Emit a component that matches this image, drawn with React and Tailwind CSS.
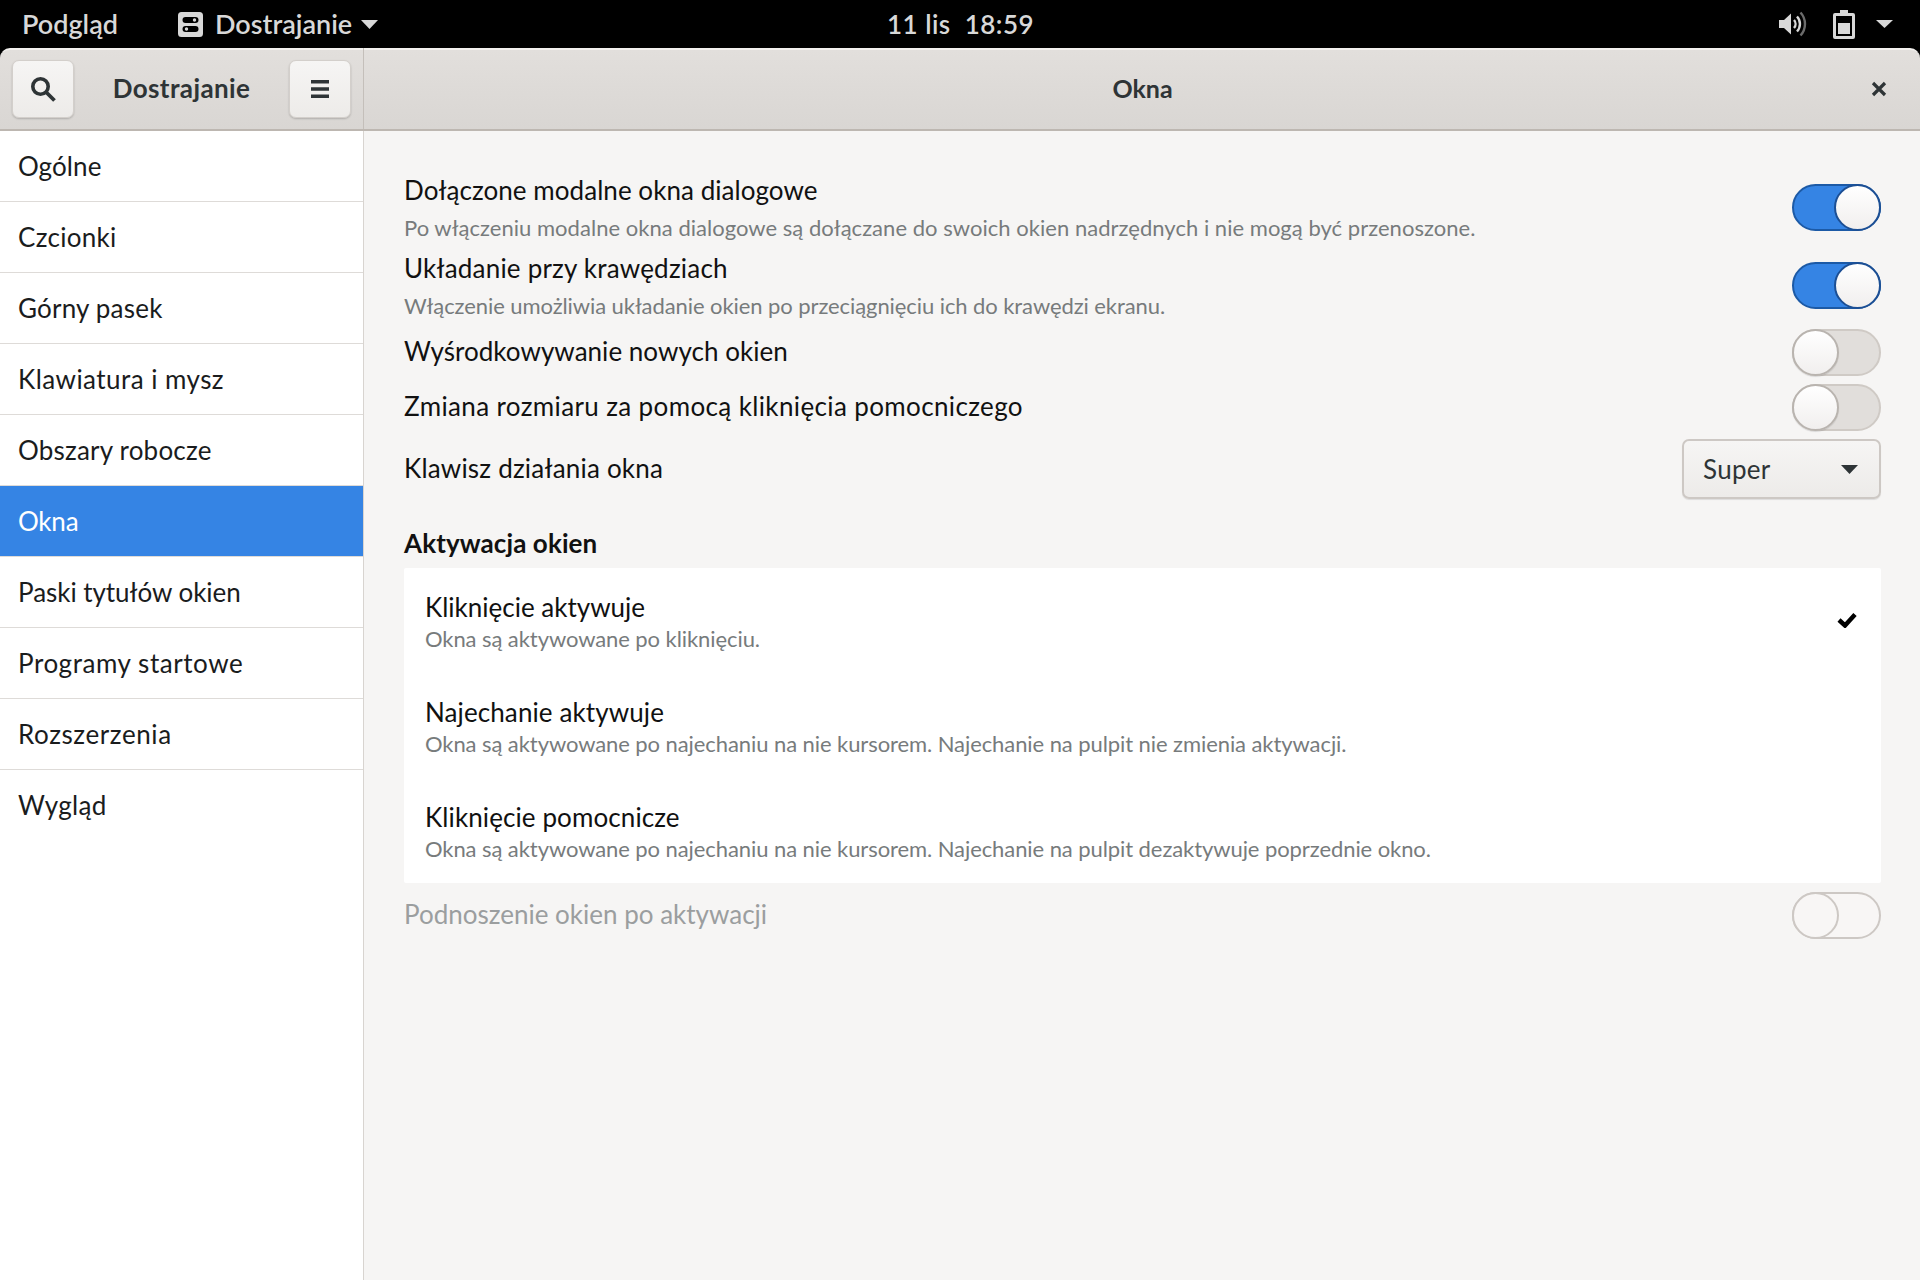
import React from "react";

const FONT = "font-['Lato','Noto_Sans',sans-serif]";

function Switch({ state }) {
  if (state === "on")
    return (
      <div className="flex h-[47px] w-[89px] shrink-0 justify-end rounded-full border-2 border-[#1c5aa6] bg-[#3584e4]">
        <div className="-m-[2px] h-[47px] w-[47px] rounded-full border-2 border-[#1c4f94] bg-gradient-to-b from-white to-[#f1efee]" />
      </div>
    );
  if (state === "disabled")
    return (
      <div className="flex h-[47px] w-[89px] shrink-0 justify-start rounded-full border-2 border-[#cdc8c4] bg-[#f8f6f5]">
        <div className="-m-[2px] h-[47px] w-[47px] rounded-full border-2 border-[#cdc8c4] bg-[#f8f6f5]" />
      </div>
    );
  return (
    <div className="flex h-[47px] w-[89px] shrink-0 justify-start rounded-full border-2 border-[#cfcac5] bg-[#e1dedb]">
      <div className="-m-[2px] h-[47px] w-[47px] rounded-full border-2 border-[#b9b4af] bg-gradient-to-b from-white to-[#f1efee] shadow-[0_1px_1px_rgba(0,0,0,0.12)]" />
    </div>
  );
}

const SIDEBAR = [
  ["Ogólne", "tracking-[0.1px]"],
  ["Czcionki", "tracking-[0.3px]"],
  ["Górny pasek", "tracking-[0.2px]"],
  ["Klawiatura i mysz", "tracking-[0.45px]"],
  ["Obszary robocze", "tracking-[0.2px]"],
  ["Okna", "tracking-[-0.2px]"],
  ["Paski tytułów okien", "tracking-[-0.05px]"],
  ["Programy startowe", "tracking-[0.55px]"],
  ["Rozszerzenia", "tracking-[0.6px]"],
  ["Wygląd", "tracking-[0.3px]"],
];

function HeaderButton({ children }) {
  return (
    <div className="flex h-[58px] w-[62px] items-center justify-center rounded-[7px] border border-[#d3cfcb] bg-gradient-to-b from-[#f6f5f4] to-[#edebe9] shadow-[0_1px_2px_rgba(0,0,0,0.2)]">
      {children}
    </div>
  );
}

function TopBar() {
  return (
    <div className="relative flex h-12 items-center bg-black text-[27px] font-semibold text-[#d8d8d8]">
      <span className="ml-[22px] w-[156px]">Podgląd</span>
      <svg width="25" height="25" viewBox="0 0 25 25" className="mr-[12px]">
        <path
          fillRule="evenodd"
          fill="#d8d8d8"
          d="M3.500 0h18A3.500 3.500 0 0 1 25 3.500v18a3.500 3.500 0 0 1-3.500 3.500h-18A3.500 3.500 0 0 1 0 21.500v-18A3.500 3.500 0 0 1 3.500 0zM7.500 5a2.900 2.900 0 0 0 0 6h10a2.900 2.900 0 0 0 0-6zM7.500 14a2.900 2.900 0 0 0 0 6h10a2.900 2.900 0 0 0 0-6z"
        />
        <circle cx="16.500" cy="8" r="1.700" fill="#d8d8d8" />
        <circle cx="8.500" cy="17" r="1.700" fill="#d8d8d8" />
      </svg>
      <span>Dostrajanie</span>
      <svg width="17" height="9" viewBox="0 0 17 9" className="ml-[9px]">
        <path d="M0 0h17L8.500 9z" fill="#d8d8d8" />
      </svg>
      <span className="absolute left-[887px] text-[26px] tracking-[0.5px]">11 lis&nbsp; 18:59</span>
      <div className="ml-auto flex items-center">
        <svg width="28" height="28" viewBox="0 0 28 28" className="mr-[26px]">
          <path d="M0 10h5l7-6.500v21L5 18H0z" fill="#d8d8d8" />
          <path d="M15 10a6 6 0 0 1 0 8" fill="none" stroke="#d8d8d8" strokeWidth="2.400" />
          <path d="M18 6.500a11 11 0 0 1 0 15" fill="none" stroke="#d8d8d8" strokeWidth="2.400" />
          <path d="M21.500 2.500a17 17 0 0 1 0 23" fill="none" stroke="#6b6b6b" strokeWidth="2.400" />
        </svg>
        <svg width="22" height="29" viewBox="0 0 22 29" className="mr-[21px]">
          <path
            fillRule="evenodd"
            fill="#d8d8d8"
            d="M7 0h8v3h5a2 2 0 0 1 2 2v22a2 2 0 0 1-2 2H2a2 2 0 0 1-2-2V5a2 2 0 0 1 2-2h5zM3 6v20h16V6z"
          />
          <rect x="5" y="13" width="12" height="11" fill="#d8d8d8" />
        </svg>
        <svg width="17" height="8" viewBox="0 0 17 8" className="mr-[27px]">
          <path d="M0 0h17L8.500 8z" fill="#d8d8d8" />
        </svg>
      </div>
    </div>
  );
}

function Header() {
  return (
    <div className="flex h-[83px] shrink-0 rounded-t-[10px] border-b-2 border-t-2 border-b-[#bdb7b1] border-t-[#f3f1ef] bg-gradient-to-b from-[#e2dfdc] to-[#d9d6d3]">
      <div className="-mt-[2px] flex w-[364px] shrink-0 items-center justify-between border-r border-[#c4bfba] pl-3 pr-3">
        <HeaderButton>
          <svg width="26" height="26" viewBox="0 0 26 26">
            <circle cx="10.500" cy="10.500" r="7.700" fill="none" stroke="#2e3436" strokeWidth="3.600" />
            <path d="M16 16l8.500 8.500" stroke="#2e3436" strokeWidth="3.800" />
          </svg>
        </HeaderButton>
        <span className="text-[26px] font-bold tracking-[0.4px] text-[#2e3436]">Dostrajanie</span>
        <HeaderButton>
          <svg width="18" height="18" viewBox="0 0 18 18">
            <path d="M0 1.800h18M0 9h18M0 16.200h18" stroke="#2e3436" strokeWidth="3.500" />
          </svg>
        </HeaderButton>
      </div>
      <div className="-mt-[2px] flex flex-1 items-center">
        <span className="flex-1 pl-[50px] text-center text-[25px] font-bold text-[#2e3436]">Okna</span>
        <svg width="16" height="16" viewBox="0 0 16 16" className="mr-[33px]">
          <path d="M2 2l12 12M14 2L2 14" stroke="#2e3436" strokeWidth="3.200" />
        </svg>
      </div>
    </div>
  );
}

function Sidebar() {
  return (
    <div className="w-[364px] shrink-0 border-r border-[#d8d4d0] bg-white">
      {SIDEBAR.map(([s, t], i) => (
        <div
          key={s}
          className={
            s === "Okna"
              ? `flex h-[71px] items-center border-b border-[#dedbd8] bg-[#3584e4] pl-[18px] text-[26px] text-white ${t}`
              : i === SIDEBAR.length - 1
                ? `flex h-[71px] items-center pl-[18px] text-[26px] text-[#1a1c1d] ${t}`
                : `flex h-[71px] items-center border-b border-[#dedbd8] pl-[18px] text-[26px] text-[#1a1c1d] ${t}`
          }
        >
          {s}
        </div>
      ))}
    </div>
  );
}

function Row({ title, desc, state, tt, dt }) {
  return (
    <div className="flex h-[78px] items-center justify-between">
      <div>
        <div className={`flex h-[44px] items-center text-[26px] text-[#111] ${tt}`}>{title}</div>
        <div className={`flex h-[34px] items-center pb-[3px] text-[22px] text-[#777b7c] ${dt}`}>{desc}</div>
      </div>
      <Switch state={state} />
    </div>
  );
}

function Simple({ title, state, h, tt }) {
  return (
    <div className={`flex items-center justify-between ${h}`}>
      <span className={`mb-[2px] text-[26px] text-[#111] ${tt}`}>{title}</span>
      <Switch state={state} />
    </div>
  );
}

function Option({ title, desc, checked, tt, dt }) {
  return (
    <div className="flex h-[105px] items-start justify-between pl-[21px] pr-[24px] pt-[21px]">
      <div>
        <div className={`flex h-[36px] items-center text-[26px] text-[#111] ${tt}`}>{title}</div>
        <div className={`flex h-[27px] items-center text-[22px] text-[#777b7c] ${dt}`}>{desc}</div>
      </div>
      {checked && (
        <svg width="20" height="16" viewBox="0 0 20 16" className="mt-[23px]">
          <path d="M2 8l6 5.500L18 2.500" fill="none" stroke="#000" strokeWidth="4.500" />
        </svg>
      )}
    </div>
  );
}

function Main() {
  return (
    <div className="flex-1 bg-[#f6f5f4] pl-[40px] pr-[39px] pt-[37px]">
      <Row
        title="Dołączone modalne okna dialogowe"
        desc="Po włączeniu modalne okna dialogowe są dołączane do swoich okien nadrzędnych i nie mogą być przenoszone."
        state="on"
        tt="tracking-[0.05px]"
        dt="tracking-[0.03px]"
      />
      <Row
        title="Układanie przy krawędziach"
        desc="Włączenie umożliwia układanie okien po przeciągnięciu ich do krawędzi ekranu."
        state="on"
        tt="tracking-[0.2px]"
        dt="tracking-[-0.08px]"
      />
      <Simple title="Wyśrodkowywanie nowych okien" state="off" h="h-[56px]" tt="tracking-[0.03px]" />
      <Simple title="Zmiana rozmiaru za pomocą kliknięcia pomocniczego" state="off" h="h-[54px]" tt="tracking-[0.37px]" />
      <div className="flex h-[70px] items-center justify-between">
        <span className="mb-[2px] text-[26px] tracking-[0.2px] text-[#111]">Klawisz działania okna</span>
        <div className="flex h-[60px] w-[199px] items-center justify-between rounded-[7px] border-2 border-[#cdc8c4] bg-gradient-to-b from-[#f6f5f4] to-[#edebe9] pl-[19px] pr-[21px] shadow-[0_1px_1px_rgba(0,0,0,0.1)]">
          <span className="text-[26px] tracking-[0.3px] text-[#2e3436]">Super</span>
          <svg width="17" height="9" viewBox="0 0 17 9">
            <path d="M0 0h17L8.500 9z" fill="#2e3436" />
          </svg>
        </div>
      </div>
      <div className="flex h-[64px] items-center pt-[14px] text-[26px] font-bold tracking-[0.1px] text-[#111]">Aktywacja okien</div>
      <div className="rounded-[2px] bg-white">
        <Option title="Kliknięcie aktywuje" desc="Okna są aktywowane po kliknięciu." checked tt="" dt="tracking-[-0.08px]" />
        <Option
          title="Najechanie aktywuje"
          desc="Okna są aktywowane po najechaniu na nie kursorem. Najechanie na pulpit nie zmienia aktywacji."
          tt="tracking-[0.1px]"
          dt="tracking-[-0.08px]"
        />
        <Option
          title="Kliknięcie pomocnicze"
          desc="Okna są aktywowane po najechaniu na nie kursorem. Najechanie na pulpit dezaktywuje poprzednie okno."
          tt="tracking-[0.1px]"
          dt="tracking-[-0.08px]"
        />
      </div>
      <div className="flex h-[64px] items-center justify-between">
        <span className="mb-[2px] text-[26px] text-[#9b9e9f]">Podnoszenie okien po aktywacji</span>
        <Switch state="disabled" />
      </div>
    </div>
  );
}

export default function App() {
  return (
    <div className={`flex h-[1280px] w-[1920px] flex-col overflow-hidden bg-black ${FONT}`}>
      <TopBar />
      <Header />
      <div className="flex flex-1">
        <Sidebar />
        <Main />
      </div>
    </div>
  );
}
